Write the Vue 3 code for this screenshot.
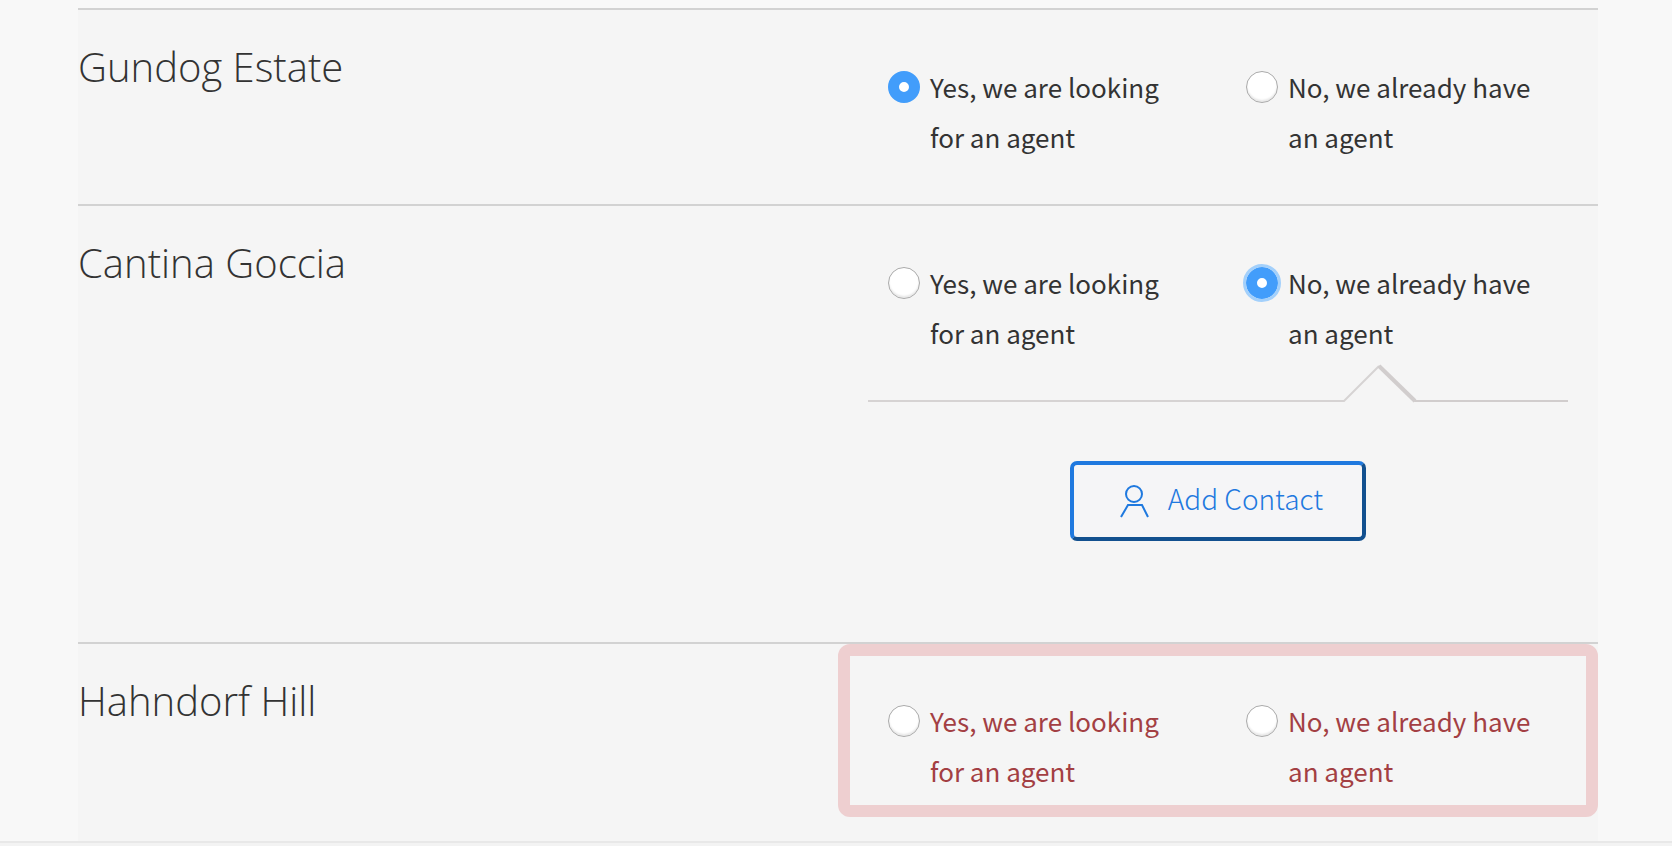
<script setup>
const yes = 'Yes, we are looking for an agent'
const no = 'No, we already have an agent'
</script>

<template>
  <div class="page">
    <div class="panel">
      <section class="row row--first">
        <h2 class="name">Gundog Estate</h2>
        <div class="side">
          <div class="choices">
            <label class="opt">
              <span class="radio radio--on"></span>
              <span class="text">{{ yes }}</span>
            </label>
            <label class="opt">
              <span class="radio"></span>
              <span class="text">{{ no }}</span>
            </label>
          </div>
        </div>
      </section>

      <section class="row row--second">
        <h2 class="name">Cantina Goccia</h2>
        <div class="side">
          <div class="choices">
            <label class="opt">
              <span class="radio"></span>
              <span class="text">{{ yes }}</span>
            </label>
            <label class="opt">
              <span class="radio radio--on radio--focus"></span>
              <span class="text">{{ no }}</span>
            </label>
          </div>
          <div class="reveal">
            <svg class="divider" width="700" height="40" viewBox="0 0 700 40">
              <path d="M0 37H476L511 2" fill="none" stroke="#d6d3d3" stroke-width="2" />
              <path d="M511 2L547 37H700" fill="none" stroke="#d1cdcd" stroke-width="2" />
              <path d="M511 2L547 37" fill="none" stroke="#d1cdcd" stroke-width="4" />
            </svg>
            <button class="add" type="button">
              <svg width="30" height="34" viewBox="0 0 30 34" fill="none" stroke="#1f79df" stroke-width="2">
                <circle cx="15" cy="10" r="8" />
                <path d="M2 33L9 21H23L29 33" />
              </svg>
              <span>Add Contact</span>
            </button>
          </div>
        </div>
      </section>

      <section class="row row--third">
        <h2 class="name">Hahndorf Hill</h2>
        <div class="side">
          <div class="choices choices--error">
            <label class="opt">
              <span class="radio"></span>
              <span class="text">{{ yes }}</span>
            </label>
            <label class="opt">
              <span class="radio"></span>
              <span class="text">{{ no }}</span>
            </label>
          </div>
        </div>
      </section>
    </div>
  </div>
</template>

<style>
html, body {
  margin: 0;
  background: #f8f8f8;
}
</style>

<style scoped>
.page {
  height: 846px;
  overflow: hidden;
  box-sizing: border-box;
  padding: 8px 74px 0 78px;
  background: #f8f8f8;
}
.panel {
  height: 833px;
  background: #f5f5f5;
}
.page::after {
  content: "";
  display: block;
  height: 5px;
  margin: 0 -74px 0 -78px;
  border-top: 2px solid #e8e8e8;
  background: #f3f3f3;
}
.row {
  display: flex;
  justify-content: space-between;
  border-top: 2px solid #d2d2d2;
  box-sizing: border-box;
}
.row--first { height: 196px; }
.row--second { height: 438px; }
.row--third { height: 197px; }
.name {
  margin: 0;
  padding-top: 32px;
  font-family: "Open Sans", sans-serif;
  font-weight: 300;
  font-size: 40px;
  line-height: 50px;
  color: #333;
}
.side {
  width: 760px;
}
.choices {
  display: flex;
  box-sizing: border-box;
  height: 173px;
  padding: 49px 0 0 38px;
  border: 12px solid transparent;
  border-radius: 12px;
  font-family: "Noto Sans CJK SC", "Noto Sans", sans-serif;
  font-size: 26px;
  line-height: 50px;
  color: #333;
}
.choices--error {
  border-color: #eecfd0;
  color: #a33f43;
}
.opt {
  display: flex;
  width: 358px;
  flex: none;
}
.radio {
  flex: none;
  box-sizing: border-box;
  width: 32px;
  height: 32px;
  margin: 0 10px 0 0;
  border: 1px solid #aaa;
  border-radius: 50%;
  background: #fff;
  box-shadow: inset 0 -2px 2px #e8e8e8;
}
.radio--on {
  border: 11px solid #429dfb;
  box-shadow: none;
}
.radio--focus {
  outline: 3px solid #a3d0fb;
}
.text {
  width: 250px;
  margin-top: -9px;
}
.reveal {
  display: flex;
  flex-direction: column;
  align-items: center;
  margin-top: -15px;
}
.divider {
  display: block;
  margin-bottom: 57px;
  margin-left: -1px;
}
.add {
  display: flex;
  align-items: center;
  justify-content: center;
  gap: 19px;
  box-sizing: border-box;
  width: 296px;
  height: 80px;
  padding: 0 0 0 6px;
  border: 4px solid;
  border-color: #1f79df #12508f #12508f #1f79df;
  border-radius: 7px;
  background: #f5f5f7;
  font-family: "Noto Sans CJK SC", "Noto Sans", sans-serif;
  font-weight: 300;
  font-size: 28px;
  color: #1f79df;
}
.add span {
  margin-top: -7px;
}
</style>
